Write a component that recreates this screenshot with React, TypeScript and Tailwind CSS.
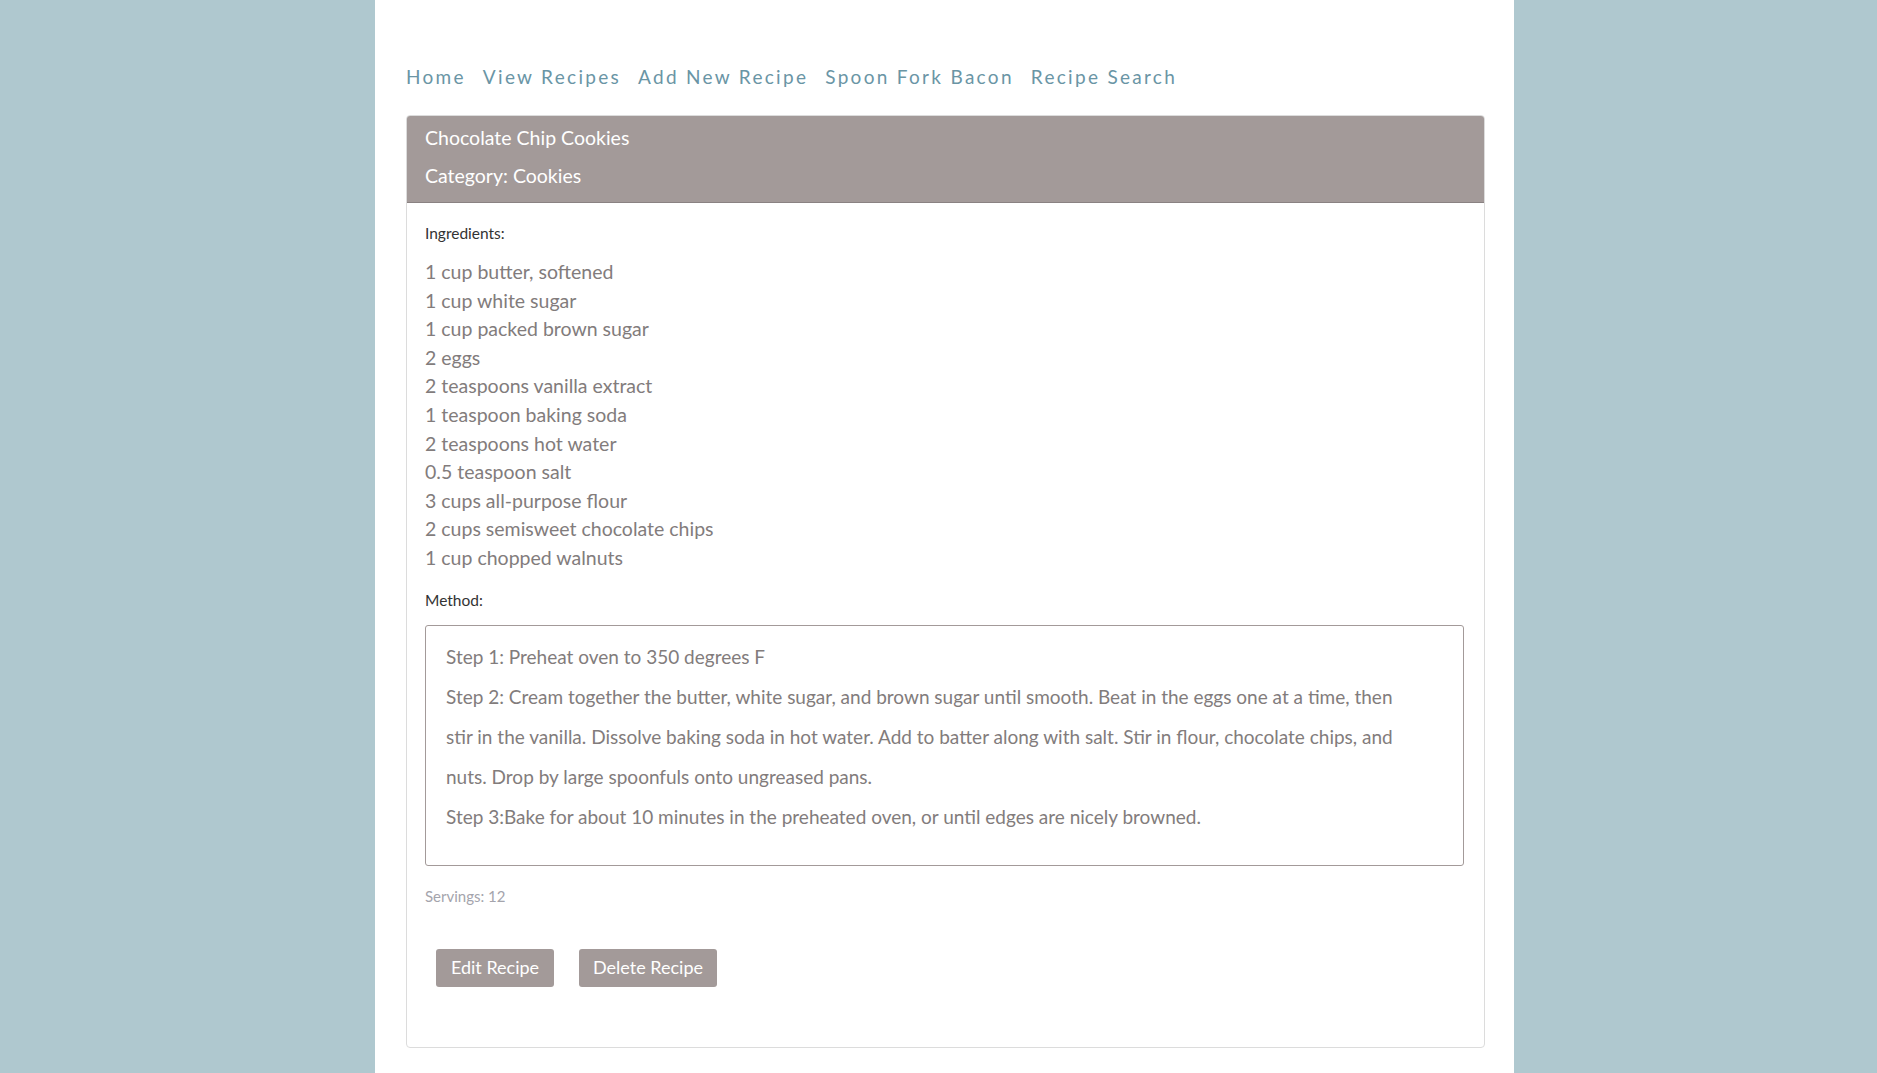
const ingredients = [
  '1 cup butter, softened',
  '1 cup white sugar',
  '1 cup packed brown sugar',
  '2 eggs',
  '2 teaspoons vanilla extract',
  '1 teaspoon baking soda',
  '2 teaspoons hot water',
  '0.5 teaspoon salt',
  '3 cups all-purpose flour',
  '2 cups semisweet chocolate chips',
  '1 cup chopped walnuts',
];

const steps = [
  'Step 1: Preheat oven to 350 degrees F',
  'Step 2: Cream together the butter, white sugar, and brown sugar until smooth. Beat in the eggs one at a time, then stir in the vanilla. Dissolve baking soda in hot water. Add to batter along with salt. Stir in flour, chocolate chips, and nuts. Drop by large spoonfuls onto ungreased pans.',
  'Step 3:Bake for about 10 minutes in the preheated oven, or until edges are nicely browned.',
];

const navLinks = ['Home', 'View Recipes', 'Add New Recipe', 'Spoon Fork Bacon', 'Recipe Search'];

export default function App() {
  return (
    <div className="min-h-screen bg-[#afc8cf]" style={{ fontFamily: 'Lato, "Open Sans", sans-serif' }}>
      <div className="ml-[375px] w-[1139px] min-h-screen bg-white pl-[31px] pr-[29px] pt-[64px] pb-[26px]">
        {/* Nav */}
        <nav className="flex gap-[17px] text-[19px] leading-[26px] tracking-[2.3px] text-[#6a95a5]">
          {navLinks.map(l => (
            <a key={l} href="#" className="hover:text-[#4a7585]">{l}</a>
          ))}
        </nav>

        {/* Card */}
        <div className="mt-[25px] border border-[#dcdcdc] rounded-[4px] overflow-hidden">
          <div className="bg-[#a39a99] border-b border-[#8a8282] px-[18px] pt-[8px] pb-[12px] text-white text-[19.5px] leading-[28px]">
            <p>Chocolate Chip Cookies</p>
            <p className="mt-[10px]">Category: Cookies</p>
          </div>

          <div className="px-[18px] pt-[20px] pb-[60px]">
            <p className="text-[15.5px] leading-[20px] text-[#333]">Ingredients:</p>
            <ul className="mt-[15px] text-[19.5px] leading-[28.6px] text-[#827c7c]">
              {ingredients.map(i => (
                <li key={i}>{i}</li>
              ))}
            </ul>

            <p className="mt-[17px] text-[15.5px] leading-[20px] text-[#333]">Method:</p>
            <div className="mt-[15px] mr-[2px] border border-[#a39a99] rounded-[3px] pl-[20px] pr-[50px] pt-[11px] pb-[28px] text-[19px] leading-[40px] text-[#827c7c]">
              {steps.map(s => <p key={s}>{s}</p>)}
            </div>

            <p className="mt-[20px] text-[15px] leading-[20px] text-[#a4a4ac]">Servings: 12</p>

            <div className="mt-[43px] ml-[11px] flex gap-[25px]">
              <button className="w-[118px] h-[38px] bg-[#a39a99] text-white text-[18px] rounded-[3px]">Edit Recipe</button>
              <button className="w-[138px] h-[38px] bg-[#a39a99] text-white text-[18px] rounded-[3px]">Delete Recipe</button>
            </div>
          </div>
        </div>
      </div>
    </div>
  );
}
